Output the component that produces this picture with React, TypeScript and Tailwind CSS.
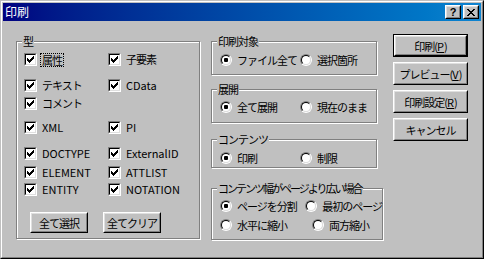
import React from 'react';

const bevelOut =
  'border border-t-white border-l-white border-r-black border-b-black';
const bevelOutInner =
  'border border-t-[#dfdfdf] border-l-[#dfdfdf] border-r-[#808080] border-b-[#808080]';

// latin labels keep normal spacing, japanese ones are squeezed like the bitmap font
const isLatin = (s: string) => /^[A-Za-z]+$/.test(s);

function CheckBox() {
  return (
    <div className="w-[13px] h-[13px] shrink-0 border border-t-[#808080] border-l-[#808080] border-r-white border-b-white">
      <div className="w-full h-full border border-t-black border-l-black border-r-[#dfdfdf] border-b-[#dfdfdf] bg-white p-px">
        <svg width="7" height="7" viewBox="0 0 7 7" shapeRendering="crispEdges" className="block">
          <path
            d="M0 2h1v3H0zM1 3h1v3H1zM2 4h1v3H2zM3 3h1v3H3zM4 2h1v3H4zM5 1h1v3H5zM6 0h1v3H6z"
            fill="#000"
          />
        </svg>
      </div>
    </div>
  );
}

function Radio({ on }: { on?: boolean }) {
  return (
    <div className="w-[12px] h-[12px] shrink-0 rounded-full border border-t-[#808080] border-l-[#808080] border-r-white border-b-white">
      <div className="w-full h-full rounded-full border border-t-black border-l-black border-r-[#dfdfdf] border-b-[#dfdfdf] bg-white flex items-center justify-center">
        {on && <div className="w-[4px] h-[4px] rounded-[1px] bg-black" />}
      </div>
    </div>
  );
}

function Check({ label, focus }: { label: string; focus?: boolean }) {
  const sp = isLatin(label) ? 'tracking-normal' : 'tracking-[-1px]';
  return (
    <div className="flex items-center h-[13px] whitespace-nowrap">
      <CheckBox />
      {focus ? (
        <span className={`ml-[3px] px-[1px] leading-[12px] border border-dotted border-black ${sp}`}>{label}</span>
      ) : (
        <span className={`ml-[5px] leading-[13px] ${sp}`}>{label}</span>
      )}
    </div>
  );
}

function Opt({ label, on, w }: { label: string; on?: boolean; w: string }) {
  return (
    <div className={`flex items-center h-[12px] ${w}`}>
      <Radio on={on} />
      <span className="ml-[5px] leading-[12px] whitespace-nowrap">{label}</span>
    </div>
  );
}

function WinButton({ children, className, isDefault }: { children: React.ReactNode; className: string; isDefault?: boolean }) {
  return (
    <button className={`${className} ${isDefault ? 'border border-black' : ''} bg-[#c0c0c0] block whitespace-nowrap`}>
      <div className={`h-full ${bevelOut}`}>
        <div className={`h-full ${bevelOutInner} flex items-center justify-center leading-[12px]`}>{children}</div>
      </div>
    </button>
  );
}

function Group({ title, className, tight, children }: { title: string; className: string; tight?: boolean; children: React.ReactNode }) {
  return (
    <fieldset className={`${className} border border-[#808080] shadow-[inset_1px_1px_0_#fff,1px_1px_0_#fff] min-w-0`}>
      <legend className={`ml-[5px] px-[1px] leading-[13px] bg-[#c0c0c0] whitespace-nowrap ${tight ? 'tracking-[-2px]' : ''}`}>
        {title}
      </legend>
      {children}
    </fieldset>
  );
}

export default function App() {
  return (
    <div className="w-[484px] h-[259px] bg-[#c0c0c0] text-black text-[11px] tracking-[-1px] font-['Noto_Sans_CJK_JP',sans-serif] border border-t-[#c0c0c0] border-l-[#c0c0c0] border-r-black border-b-black">
      <div className="h-full border border-t-white border-l-white border-r-[#808080] border-b-[#808080] p-px flex flex-col">
        {/* title bar */}
        <div className="h-[18px] shrink-0 bg-linear-to-r from-[#000080] to-[#1084d0] flex items-center pl-[2px] pr-[2px]">
          <span className="text-white text-[12px] leading-[14px] tracking-normal">印刷</span>
          <div className="ml-auto flex gap-[2px]">
            <button className={`w-[16px] h-[14px] bg-[#c0c0c0] ${bevelOut}`}>
              <div className={`h-full ${bevelOutInner} flex items-center justify-center text-[11px] font-bold leading-[10px] tracking-normal font-['Liberation_Sans',sans-serif]`}>
                ?
              </div>
            </button>
            <button className={`w-[16px] h-[14px] bg-[#c0c0c0] ${bevelOut}`}>
              <div className={`h-full ${bevelOutInner} flex items-center justify-center`}>
                <svg width="8" height="7" viewBox="0 0 8 7" shapeRendering="crispEdges" className="block">
                  <path
                    d="M0 0h2v1H0zM6 0h2v1H6zM1 1h2v1H1zM5 1h2v1H5zM2 2h4v1H2zM3 3h2v1H3zM2 4h4v1H2zM1 5h2v1H1zM5 5h2v1H5zM0 6h2v1H0zM6 6h2v1H6z"
                    fill="#000"
                  />
                </svg>
              </div>
            </button>
          </div>
        </div>

        {/* client */}
        <div className="flex items-start pl-[13px]">
          <Group title="型" className="mt-[14px] w-[184px] h-[204px]">
            <div className="pl-[7px] pt-[5px]">
              <div className="grid grid-cols-[84px_1fr]">
                <Check label="属性" focus />
                <Check label="子要素" />
              </div>
              <div className="grid grid-cols-[84px_1fr] mt-[13px]">
                <Check label="テキスト" />
                <Check label="CData" />
              </div>
              <div className="grid grid-cols-[84px_1fr] mt-[5px]">
                <Check label="コメント" />
              </div>
              <div className="grid grid-cols-[84px_1fr] mt-[11px]">
                <Check label="XML" />
                <Check label="PI" />
              </div>
              <div className="grid grid-cols-[84px_1fr] mt-[13px]">
                <Check label="DOCTYPE" />
                <Check label="ExternalID" />
              </div>
              <div className="grid grid-cols-[84px_1fr] mt-[6px]">
                <Check label="ELEMENT" />
                <Check label="ATTLIST" />
              </div>
              <div className="grid grid-cols-[84px_1fr] mt-[4px]">
                <Check label="ENTITY" />
                <Check label="NOTATION" />
              </div>
              <div className="flex gap-[15px] mt-[16px] pl-[6px]">
                <WinButton className="w-[58px] h-[21px]">全て選択</WinButton>
                <WinButton className="w-[58px] h-[21px]">全てクリア</WinButton>
              </div>
            </div>
          </Group>

          <div className="ml-[11px] flex flex-col items-start">
            <Group title="印刷対象" className="mt-[14px] w-[166px] h-[40px]">
              <div className="flex pl-[8px] pt-[6px]">
                <Opt label="ファイル全て" on w="w-[80px]" />
                <Opt label="選択箇所" w="" />
              </div>
            </Group>
            <Group title="展開" className="mt-[8px] w-[166px] h-[40px]">
              <div className="flex pl-[8px] pt-[5px]">
                <Opt label="全て展開" on w="w-[80px]" />
                <Opt label="現在のまま" w="" />
              </div>
            </Group>
            <Group title="コンテンツ" className="mt-[10px] w-[166px] h-[35px]">
              <div className="flex pl-[8px] pt-[6px]">
                <Opt label="印刷" on w="w-[80px]" />
                <Opt label="制限" w="" />
              </div>
            </Group>
            <Group title="コンテンツ幅がページより広い場合" tight className="mt-[14px] w-[172px] h-[58px]">
              <div className="pl-[8px] pt-[5px]">
                <div className="flex">
                  <Opt label="ページを分割" on w="w-[92px]" />
                  <Opt label="最初のページ" w="" />
                </div>
                <div className="flex mt-[7px]">
                  <Opt label="水平に縮小" w="w-[92px]" />
                  <Opt label="両方縮小" w="" />
                </div>
              </div>
            </Group>
          </div>

          <div className="ml-[10px] mt-[13px] flex flex-col gap-[5px]">
            <WinButton className="w-[75px] h-[23px]" isDefault>
              <span>
                印刷(<span className="underline tracking-normal">P</span>)
              </span>
            </WinButton>
            <WinButton className="w-[75px] h-[23px]">
              <span>
                プレビュー(<span className="underline tracking-normal">V</span>)
              </span>
            </WinButton>
            <WinButton className="w-[75px] h-[23px]">
              <span>
                印刷設定(<span className="underline tracking-normal">R</span>)
              </span>
            </WinButton>
            <WinButton className="w-[75px] h-[23px]">キャンセル</WinButton>
          </div>
        </div>
      </div>
    </div>
  );
}
